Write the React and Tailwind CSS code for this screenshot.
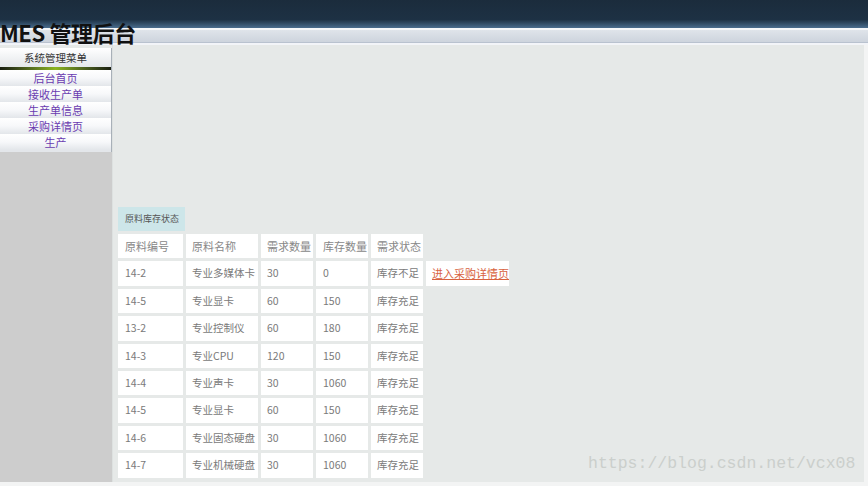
const MENU = ['后台首页', '接收生产单', '生产单信息', '采购详情页', '生产']

const HEAD = ['原料编号', '原料名称', '需求数量', '库存数量', '需求状态']

const ROWS = [
  ['14-2', '专业多媒体卡', '30', '0', '库存不足', true],
  ['14-5', '专业显卡', '60', '150', '库存充足'],
  ['13-2', '专业控制仪', '60', '180', '库存充足'],
  ['14-3', '专业CPU', '120', '150', '库存充足'],
  ['14-4', '专业声卡', '30', '1060', '库存充足'],
  ['14-5', '专业显卡', '60', '150', '库存充足'],
  ['14-6', '专业固态硬盘', '30', '1060', '库存充足'],
  ['14-7', '专业机械硬盘', '30', '1060', '库存充足'],
]

const WIDTHS = ['w-[65px] pl-[7px]', 'w-[72px] pl-[6px]', 'w-[52px] pl-[6px]', 'w-[52px] pl-[7px]', 'w-[52px] pl-[6px]']

const font = { fontFamily: '"Noto Sans CJK SC", "Noto Sans", sans-serif' }

function Header() {
  return (
    <div className="relative h-[45px]">
      <div className="h-[28px] bg-gradient-to-b from-[#1b2c3c] via-[#1d3144] via-70% to-[#4a6d8e]" />
      <div className="h-[2px] bg-[#f4f6f9]" />
      <div className="h-[12px] bg-gradient-to-b from-[#dfe4ea] to-[#cdd4dd]" />
      <div className="h-[1px] bg-[#b9c2cf]" />
      <div className="h-[2px] bg-[#f2f4f8]" />
      <h1 className="absolute left-0 top-[17px] text-[22px] font-bold leading-[30px] tracking-[-0.4px] text-[#111]">
        MES 管理后台
      </h1>
    </div>
  )
}

function Sidebar() {
  return (
    <div className="flex w-[112px] flex-col">
      <div className="h-[3px] bg-[#e6e9e8]" />
      <div className="border-r border-[#a8b0b8] bg-white">
        <div className="flex h-[19px] items-center justify-center bg-gradient-to-b from-white to-[#e4e7ea] text-[10.5px] text-[#333]">
          系统管理菜单
        </div>
        <div className="h-[3px] bg-gradient-to-r from-[#1a1f10] via-[#8db620] to-[#1a1f10]" />
        {MENU.map((m) => (
          <div
            key={m}
            className="flex h-[16px] items-center justify-center bg-gradient-to-b from-white via-[#f7f8fa] to-[#e3e6ea] text-[11px] leading-none text-[#6a3bb0]"
          >
            {m}
          </div>
        ))}
        <div className="h-[2px] bg-[#e3e6ea]" />
      </div>
      <div className="flex-1 bg-[#cdcdcd]" />
    </div>
  )
}

export default function App() {
  return (
    <div className="relative h-[486px] w-[868px] overflow-hidden bg-[#f3f4f4]" style={font}>
      <Header />
      <div className="flex h-[437px] w-[864px]">
        <Sidebar />
        <div className="flex-1 border-l border-[#dde1e0] bg-[#e6e9e8] pl-[2px] pt-[162px]">
          <div className="ml-[3px] flex h-[24px] w-[67px] items-center bg-[#cde6e9] pl-[7px] text-[9px] text-[#555]">
            原料库存状态
          </div>
          <table className="border-separate border-spacing-[3px] whitespace-nowrap text-[10.5px] leading-none text-[#7a7a7a]">
            <tbody>
              <tr>
                {HEAD.map((h, i) => (
                  <td key={h} className={`h-[24.4px] bg-white p-0 align-middle text-[11px] text-[#888] ${WIDTHS[i]}`}>
                    {h}
                  </td>
                ))}
              </tr>
              {ROWS.map((r, ri) => (
                <tr key={ri}>
                  {r.slice(0, 5).map((c, i) => (
                    <td key={i} className={`h-[24.4px] bg-white p-0 align-middle ${WIDTHS[i]}`}>
                      {c}
                    </td>
                  ))}
                  {r[5] && (
                    <td className="h-[24.4px] w-[83px] bg-white p-0 pl-[6px] align-middle text-[11px]">
                      <a href="#" className="text-[#d8623e] underline">
                        进入采购详情页
                      </a>
                    </td>
                  )}
                </tr>
              ))}
            </tbody>
          </table>
        </div>
      </div>
      <div
        className="absolute left-[588px] top-[453px] text-[16.5px] leading-[22px] text-[#cbcfcc]"
        style={{ fontFamily: '"Liberation Mono", monospace' }}
      >
        https://blog.csdn.net/vcx08
      </div>
    </div>
  )
}
